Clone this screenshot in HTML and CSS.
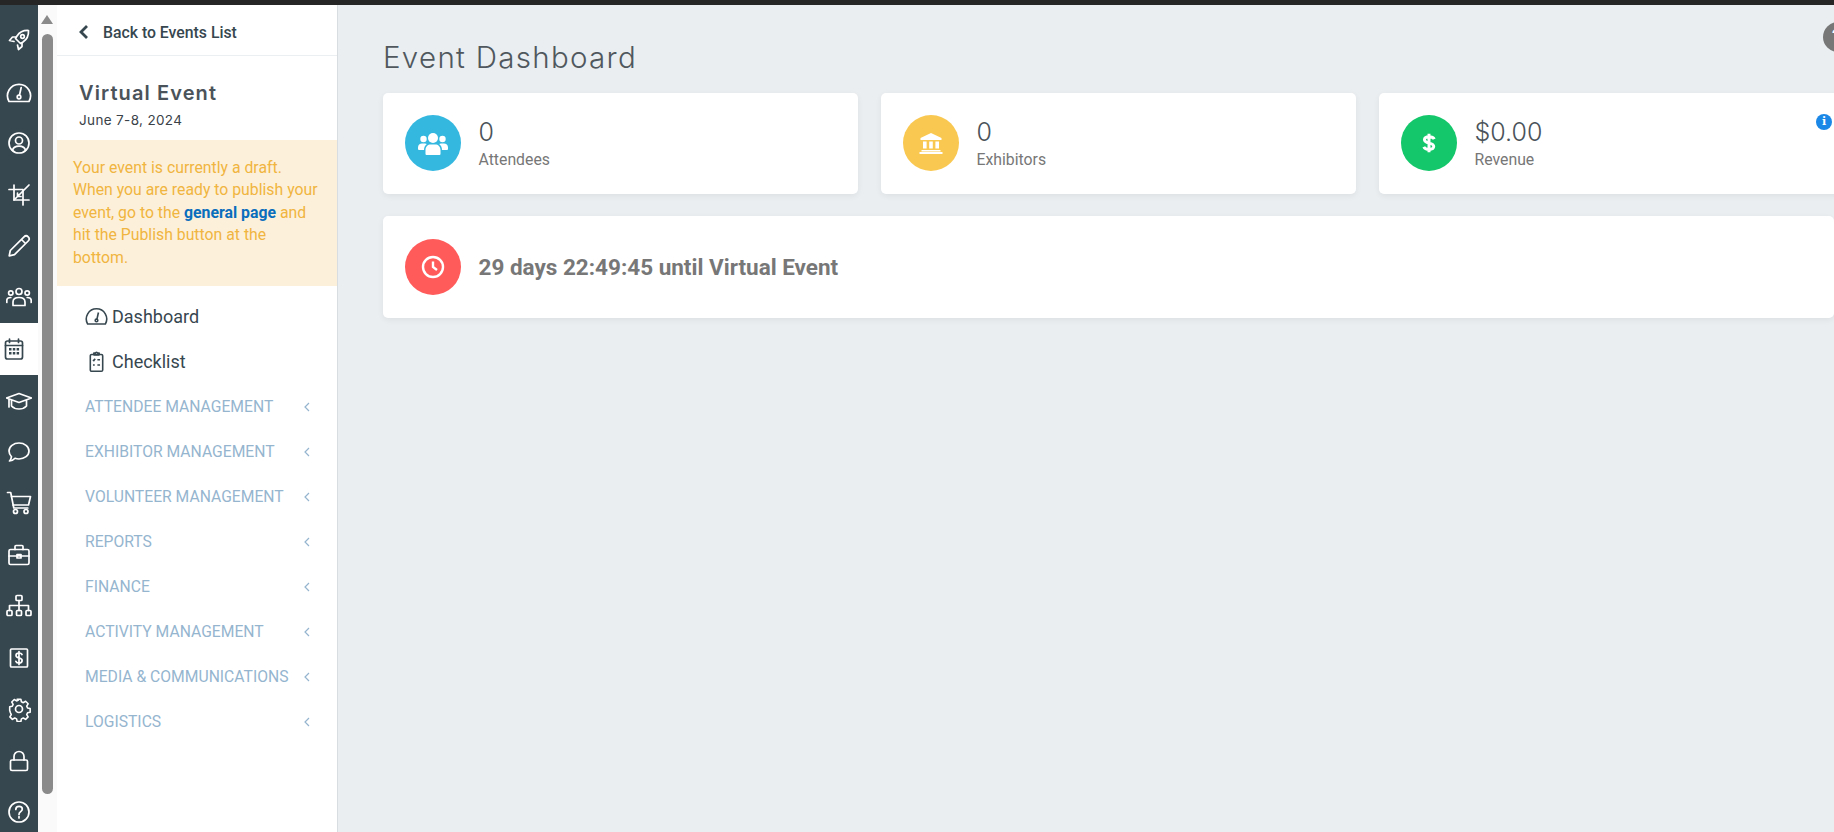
FILE: index.html
```html
<!DOCTYPE html>
<html lang="en">
<head>
  <meta charset="UTF-8">
  <meta name="viewport" content="width=device-width, initial-scale=1.0">
  <title>Event Dashboard</title>
  <link rel="stylesheet" href="styles.css">
</head>
<body>
  <div class="topbar"></div>
  <div class="app">
    <!-- icon rail -->
    <nav class="rail">
      <a class="rail-item"><svg class="rail-icon" viewBox="0 0 26 26"><path d="M22.5 3.500c-5-.3-9 1.700-11.500 5.500l-1.500 2.500 5 5 2.500-1.500c3.800-2.500 5.800-6.500 5.500-11.500z"/><circle cx="16.500" cy="9.500" r="1.800"/><path d="M10 10H6.500l-3 3.500 4.500 1M16 16v3.500l-3.500 3-1-4.500"/></svg></a>
      <a class="rail-item"><svg class="rail-icon" viewBox="0 0 26 26"><path d="M3 22.500a11.500 11.500 0 1 1 20 0z"/><path d="M13.500 16l1.700-7.500"/><circle cx="13" cy="18" r="1.800"/></svg></a>
      <a class="rail-item"><svg class="rail-icon" viewBox="0 0 26 26"><circle cx="13" cy="13" r="10"/><circle cx="13" cy="10.500" r="3.500"/><path d="M6.500 20.500c.6-3 3-4.300 6.500-4.300s5.900 1.300 6.500 4.300"/></svg></a>
      <a class="rail-item"><svg class="rail-icon" viewBox="0 0 26 26"><path d="M8 3v15h15"/><path d="M3 7.500h14V23"/><path d="M23 3l-6 6M8 18l9-9M11.500 11v3.500H15"/></svg></a>
      <a class="rail-item"><svg class="rail-icon" viewBox="0 0 26 26"><path d="M18 3.800a2.900 2.900 0 0 1 4.200 4.200L8.500 21.700l-5.300 1.100 1.100-5.300zM15.500 6.500l4 4"/></svg></a>
      <a class="rail-item"><svg class="rail-icon" viewBox="0 0 26 26"><circle cx="13" cy="6.500" r="3"/><circle cx="4.800" cy="8" r="2.200"/><circle cx="21.200" cy="8" r="2.200"/><path d="M7 20.500v-3.500c0-3 2.500-4.500 6-4.500s6 1.500 6 4.500v3.500zM.8 17.500v-2c0-1.800 1.400-3 4-3M25.200 17.500v-2c0-1.800-1.400-3-4-3"/></svg></a>
      <a class="rail-item rail-active"><svg class="rail-icon" viewBox="0 0 26 26"><rect x="4.500" y="5" width="17" height="18" rx="2"/><path d="M4.500 9.500h17M8.500 3v3.500M17.500 3v3.500"/><path class="rail-dots" d="M8 12h2.500v2.500H8zM11.800 12h2.500v2.500h-2.500zM15.600 12h2.500v2.500h-2.500zM8 16h2.500v2.500H8zM11.800 16h2.500v2.500h-2.500zM15.600 16h2.500v2.500h-2.500z"/></svg></a>
      <a class="rail-item"><svg class="rail-icon" viewBox="0 0 26 26"><path d="M.5 10L13 5.500 25.500 10 13 14.500zM5.500 12v6c2 2.200 4.500 3 7.500 3s5.500-.8 7.500-3v-6M3 11v8"/></svg></a>
      <a class="rail-item"><svg class="rail-icon" viewBox="0 0 26 26"><path d="M13 4c5.500 0 10 3.500 10 8s-4.500 8-10 8c-1.500 0-2.800-.2-4-.7C7.500 21 5.500 22 3.500 22c1-1 1.800-2.500 2-4.300C4 16 3 14.100 3 12c0-4.500 4.500-8 10-8z"/></svg></a>
      <a class="rail-item"><svg class="rail-icon" viewBox="0 0 26 26"><path d="M1.500 2.500h3.200l3.100 15.500h14"/><path d="M5.500 6.500h19l-2 8.500H7"/><circle cx="9.500" cy="21.500" r="2"/><circle cx="20" cy="21.500" r="2"/></svg></a>
      <a class="rail-item"><svg class="rail-icon" viewBox="0 0 26 26"><rect x="3" y="7.500" width="20" height="15" rx="1.500"/><path d="M9 7.500V4.500a1 1 0 0 1 1-1h6a1 1 0 0 1 1 1v3M3 14h20M11 12.500h4V16h-4z"/></svg></a>
      <a class="rail-item"><svg class="rail-icon" viewBox="0 0 26 26"><rect x="10" y="2.500" width="6" height="5" rx="1"/><rect x="1" y="17.500" width="5" height="5" rx="1"/><rect x="10.500" y="17.500" width="5" height="5" rx="1"/><rect x="20" y="17.500" width="5" height="5" rx="1"/><path d="M13 7.500v10M3.500 17.500v-5h19v5"/></svg></a>
      <a class="rail-item"><svg class="rail-icon" viewBox="0 0 26 26"><rect x="4.500" y="4" width="17" height="18" rx="1"/><path d="M16 9.500c-.5-1-1.500-1.500-3-1.500-1.800 0-3 .9-3 2.400 0 3.200 6.100 1.800 6.100 5.100 0 1.500-1.300 2.500-3.100 2.500-1.500 0-2.600-.6-3.100-1.700M13 6.500v13"/></svg></a>
      <a class="rail-item"><svg class="rail-icon" viewBox="0 0 26 26"><circle cx="13" cy="13" r="3.500"/><path d="M11 3h4l.6 2.800 2 .9 2.500-1.500 2.700 2.700-1.500 2.500.9 2 2.800.6v3.900l-2.800.6-.9 2 1.500 2.500-2.700 2.700-2.500-1.500-2 .9-.6 2.800h-4l-.6-2.800-2-.9-2.500 1.500-2.700-2.700 1.500-2.500-.9-2L3 15v-3.900l2.800-.6.900-2-1.500-2.500 2.700-2.700 2.500 1.500 2-.9z" transform="translate(13 13) scale(.93) translate(-13 -13.500)"/></svg></a>
      <a class="rail-item"><svg class="rail-icon" viewBox="0 0 26 26"><rect x="4.500" y="12" width="17" height="10.500" rx="1.500"/><path d="M8 12V8.500a5 5 0 0 1 10 0V12"/></svg></a>
      <a class="rail-item"><svg class="rail-icon" viewBox="0 0 26 26"><circle cx="13" cy="13" r="10"/><path d="M9.800 10.500c0-2 1.400-3.200 3.300-3.200s3.200 1.200 3.200 2.800c0 2.700-3.300 2.500-3.300 5.300M13 17.500v1.500"/></svg></a>
    </nav>

    <div class="scrollbar">
      <div class="scroll-arrow"></div>
      <div class="scroll-thumb"></div>
    </div>

    <aside class="sidebar">
      <div class="back-link">
        <svg class="back-icon" viewBox="0 0 10 16"><path d="M8 2L2 8l6 6"/></svg>
        <span>Back to Events List</span>
      </div>
      <div class="event-head">
        <h2>Virtual Event</h2>
        <p>June 7-8, 2024</p>
      </div>
      <div class="draft-alert">
        Your event is currently a draft. When you are ready to publish your event, go to the <a>general page</a> and hit the Publish button at the bottom.
      </div>
      <ul class="side-nav">
        <li class="side-link">
          <svg class="side-icon" viewBox="0 0 26 26"><path d="M3 21.500a11.500 11.500 0 1 1 20 0z"/><path d="M13.500 16l1.700-7.500"/><circle cx="13" cy="17.500" r="1.500"/></svg>
          Dashboard
        </li>
        <li class="side-link">
          <svg class="side-icon" viewBox="0 0 26 26"><rect x="6" y="5" width="14" height="19" rx="1.500"/><path d="M10 5V3.500h2a1 1 0 0 1 2 0h2V5.500h-6zM9 11l1 1 1.500-2M14 11h3M9 17h2M14 17h3"/></svg>
          Checklist
        </li>
        <li class="side-group"><span>ATTENDEE MANAGEMENT</span><svg class="caret" viewBox="0 0 6 10"><path d="M5 1L1 5l4 4"/></svg></li>
        <li class="side-group"><span>EXHIBITOR MANAGEMENT</span><svg class="caret" viewBox="0 0 6 10"><path d="M5 1L1 5l4 4"/></svg></li>
        <li class="side-group"><span>VOLUNTEER MANAGEMENT</span><svg class="caret" viewBox="0 0 6 10"><path d="M5 1L1 5l4 4"/></svg></li>
        <li class="side-group"><span>REPORTS</span><svg class="caret" viewBox="0 0 6 10"><path d="M5 1L1 5l4 4"/></svg></li>
        <li class="side-group"><span>FINANCE</span><svg class="caret" viewBox="0 0 6 10"><path d="M5 1L1 5l4 4"/></svg></li>
        <li class="side-group"><span>ACTIVITY MANAGEMENT</span><svg class="caret" viewBox="0 0 6 10"><path d="M5 1L1 5l4 4"/></svg></li>
        <li class="side-group"><span>MEDIA &amp; COMMUNICATIONS</span><svg class="caret" viewBox="0 0 6 10"><path d="M5 1L1 5l4 4"/></svg></li>
        <li class="side-group"><span>LOGISTICS</span><svg class="caret" viewBox="0 0 6 10"><path d="M5 1L1 5l4 4"/></svg></li>
      </ul>
    </aside>

    <main class="content">
      <div class="help-btn">?</div>
      <h1>Event Dashboard</h1>
      <div class="stat-row">
        <div class="card stat-card">
          <div class="circle circle-blue">
            <svg class="circle-icon" viewBox="0 0 30 24"><circle cx="15" cy="7" r="5"/><circle cx="5.500" cy="8" r="3.200"/><circle cx="24.500" cy="8" r="3.200"/><path d="M7.500 23v-4c0-3.500 2.500-5.500 5-5.500h5c2.500 0 5 2 5 5.500v4a1 1 0 0 1-1 1H8.500a1 1 0 0 1-1-1zM6 19H1a1 1 0 0 1-1-1v-1.500C0 14 1.800 12.500 4 12.500h3c.7 0 1.300.2 1.800.5C7 14.300 6 16.500 6 19zM24 19h5a1 1 0 0 0 1-1v-1.500c0-2.500-1.800-4-4-4h-3c-.7 0-1.300.2-1.800.5 1.800 1.300 2.800 3.500 2.800 6z"/></svg>
          </div>
          <div class="stat-text">
            <div class="stat-num">0</div>
            <div class="stat-label">Attendees</div>
          </div>
        </div>
        <div class="card stat-card">
          <div class="circle circle-yellow">
            <svg class="circle-bank" viewBox="0 0 24 21"><path d="M12 0L1.500 5v2h21V5zM4 8.500h3.600v7H4zM10.200 8.500h3.600v7h-3.600zM16.400 8.500H20v7h-3.600zM2.500 17h19v1.500h-19zM.5 19h23v2H.5z"/></svg>
          </div>
          <div class="stat-text">
            <div class="stat-num">0</div>
            <div class="stat-label">Exhibitors</div>
          </div>
        </div>
        <div class="card stat-card">
          <div class="circle circle-green">
            <svg class="circle-dollar" viewBox="0 0 16 24"><path d="M14 7.500C13 5.500 11 4.800 8 4.800c-3.200 0-5.200 1.300-5.200 3.600 0 5 10.600 2.400 10.600 7.400 0 2.300-2.200 3.600-5.400 3.600-3 0-5-.9-6-2.900M8 1.500v21"/></svg>
          </div>
          <div class="stat-text">
            <div class="stat-num">$0.00</div>
            <div class="stat-label">Revenue</div>
          </div>
          <div class="info-dot">i</div>
        </div>
      </div>
      <div class="card countdown">
        <div class="circle circle-red">
          <svg class="circle-clock" viewBox="0 0 24 24"><circle cx="12" cy="12" r="10"/><path d="M12 6.500V12l4 3"/></svg>
        </div>
        <div class="countdown-text">29 days 22:49:45 until Virtual Event</div>
      </div>
    </main>
  </div>
</body>
</html>
```

FILE: styles.css
```css
html, body {
  margin: 0;
  height: 100%;
  overflow: hidden;
}

body {
  font-family: Roboto, "Liberation Sans", sans-serif;
  background-color: #eaeef1;
  color: #37474f;
}

.topbar {
  height: 5px;
  background-color: #262626;
}

.app {
  display: flex;
  height: 827px;
}

/* icon rail */
.rail {
  flex: 0 0 38px;
  background-color: #37474f;
  padding-top: 9.5px;
  box-sizing: border-box;
}

.rail-item {
  display: flex;
  align-items: center;
  justify-content: center;
  height: 51.47px;
}

.rail-icon {
  width: 26px;
  height: 26px;
  fill: none;
  stroke: #fff;
  stroke-width: 1.7;
  stroke-linejoin: round;
  stroke-linecap: round;
}

.rail-active {
  background-color: #fff;
  justify-content: flex-start;
  padding-left: 1px;
}

.rail-active .rail-icon {
  stroke: #37474f;
}

.rail-dots {
  fill: #37474f;
  stroke: none;
}

/* fake browser scrollbar */
.scrollbar {
  flex: 0 0 19px;
  background-color: #fafafa;
}

.scroll-arrow {
  width: 0;
  height: 0;
  margin: 10px 0 0 3px;
  border-left: 6.5px solid transparent;
  border-right: 6.5px solid transparent;
  border-bottom: 9px solid #8a8a8a;
}

.scroll-thumb {
  width: 11px;
  height: 760px;
  margin: 10px 0 0 4px;
  background-color: #8a8a8a;
  border-radius: 6px;
}

/* sidebar */
.sidebar {
  flex: 0 0 280px;
  background-color: #fff;
  border-right: 1px solid #d8dde1;
}

.back-link {
  display: flex;
  align-items: center;
  height: 46px;
  padding: 4px 0 0 22px;
  border-bottom: 1px solid #eceff1;
  font-size: 15.8px;
  font-weight: 500;
}

.back-icon {
  width: 10px;
  height: 16px;
  margin-right: 14px;
  fill: none;
  stroke: #37474f;
  stroke-width: 2.8;
}

.event-head {
  padding: 24px 22px 0;
  height: 60px;
}

.event-head h2 {
  margin: 0;
  font-family: Inter, sans-serif;
  font-size: 20px;
  font-weight: 600;
  letter-spacing: 1.1px;
  line-height: 26px;
  color: #4b535a;
}

.event-head p {
  margin: 5px 0 0;
  font-family: Inter, sans-serif;
  font-size: 13.5px;
  line-height: 18px;
  letter-spacing: .35px;
  color: #3b4248;
}

.draft-alert {
  padding: 16.5px 16px;
  background-color: #fdf0da;
  color: #f0b540;
  font-size: 15.8px;
  line-height: 22.5px;
}

.draft-alert a {
  color: #0a6ebd;
  font-weight: 700;
}

.side-nav {
  list-style: none;
  margin: 0;
  padding: 8.5px 0 0;
}

.side-link {
  display: flex;
  align-items: center;
  height: 45px;
  padding-left: 28px;
  font-size: 18px;
  gap: 4px;
}

.side-icon {
  width: 23px;
  height: 23px;
  fill: none;
  stroke: #37474f;
  stroke-width: 1.8;
  stroke-linejoin: round;
}

.side-group {
  display: flex;
  align-items: center;
  justify-content: space-between;
  height: 45px;
  padding: 0 27px 0 28px;
  font-size: 15.7px;
  color: #95b5cf;
}

.caret {
  width: 6px;
  height: 10px;
  fill: none;
  stroke: #95b5cf;
  stroke-width: 1.2;
}

/* main area */
.content {
  flex: 1;
  min-width: 0;
  position: relative;
  padding: 35px 0 0 45px;
  box-sizing: border-box;
}

.content h1 {
  margin: 0 0 18px;
  font-family: Inter, sans-serif;
  font-size: 29.5px;
  font-weight: 300;
  line-height: 35px;
  letter-spacing: 1.3px;
  color: #50585e;
}

.help-btn {
  position: absolute;
  top: 17px;
  left: 1485px;
  width: 30px;
  height: 30px;
  padding-left: 9px;
  box-sizing: border-box;
  border-radius: 50%;
  background-color: #777;
  color: #fff;
  font-size: 20px;
  font-weight: 700;
  line-height: 30px;
}

.stat-row {
  display: flex;
  gap: 23px;
  margin-bottom: 22px;
}

.card {
  background-color: #fff;
  border-radius: 5px;
  box-shadow: 0 2px 6px rgba(0, 0, 0, .06);
}

.stat-card {
  flex: 0 0 475px;
  height: 101px;
  display: flex;
  align-items: center;
  padding: 0 0 1px 22px;
  box-sizing: border-box;
  position: relative;
}

.circle {
  flex: 0 0 56px;
  height: 56px;
  border-radius: 50%;
  display: flex;
  align-items: center;
  justify-content: center;
  margin-right: 17.5px;
}

.circle-blue { background-color: #35b8e0; }
.circle-yellow { background-color: #f9c851; }
.circle-green { background-color: #13c76a; }
.circle-red { background-color: #ff5b5b; }

.circle-icon {
  width: 30px;
  height: 24px;
  fill: #fff;
}

.circle-bank {
  width: 24px;
  height: 21px;
  fill: #fff;
}

.circle-dollar {
  width: 14px;
  height: 24px;
  fill: none;
  stroke: #fff;
  stroke-width: 3.4;
}

.circle-clock {
  width: 24px;
  height: 24px;
  fill: none;
  stroke: #fff;
  stroke-width: 2.4;
}

.stat-num {
  font-family: Inter, sans-serif;
  font-size: 25px;
  font-weight: 300;
  line-height: 30px;
  color: #4b535a;
}

.stat-label {
  margin-top: 3px;
  font-size: 15.8px;
  line-height: 20px;
  color: #777;
}

.info-dot {
  position: absolute;
  top: 21px;
  left: 437px;
  width: 16px;
  height: 16px;
  border-radius: 50%;
  background-color: #1b87e6;
  color: #fff;
  font-family: "DejaVu Serif", serif;
  font-size: 11px;
  font-weight: 700;
  line-height: 16px;
  text-align: center;
}

.countdown {
  display: flex;
  align-items: center;
  height: 102px;
  padding-left: 22px;
}

.countdown-text {
  font-size: 22.5px;
  font-weight: 700;
  color: #777;
}
```
